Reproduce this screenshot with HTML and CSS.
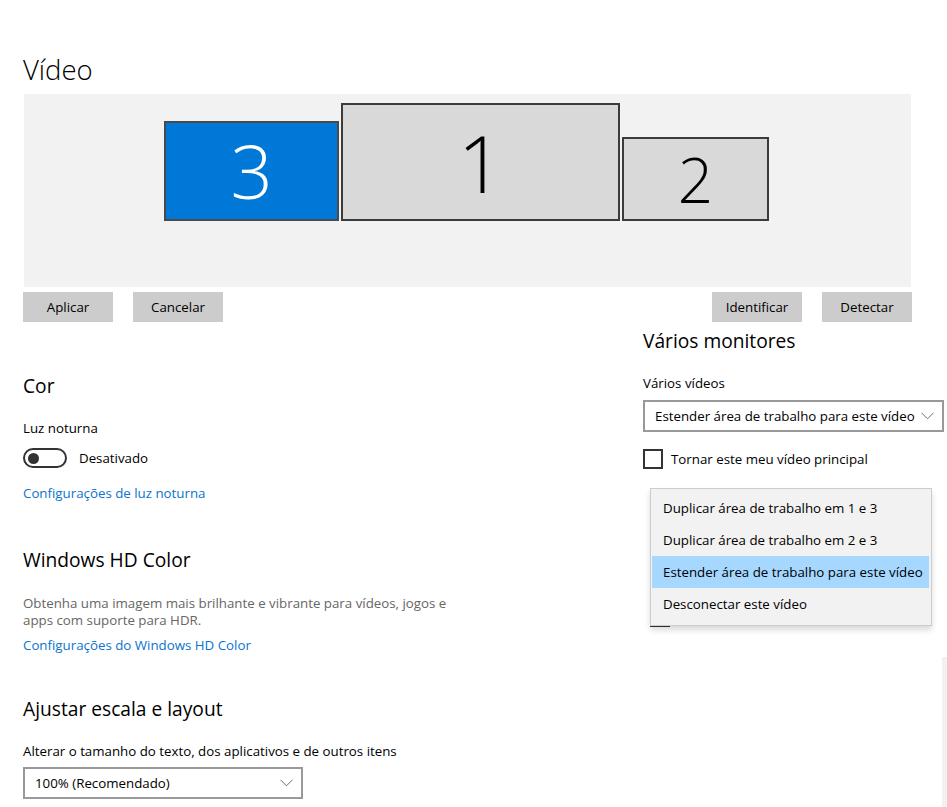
FILE: index.html
```html
<!DOCTYPE html>
<html lang="pt-BR">
<head>
<meta charset="utf-8">
<title>Vídeo</title>
<link rel="stylesheet" href="styles.css">
</head>
<body>
<div class="page">
  <h1 class="title">Vídeo</h1>
  <div class="arrange">
    <div class="monitors">
      <div class="mon mon3 selected"><span>3</span></div>
      <div class="mon mon1"><span>1</span></div>
      <div class="mon mon2"><span>2</span></div>
    </div>
  </div>
  <div class="btnrow">
    <div class="btngroup">
      <div class="btn">Aplicar</div>
      <div class="btn">Cancelar</div>
    </div>
    <div class="btngroup">
      <div class="btn">Identificar</div>
      <div class="btn">Detectar</div>
    </div>
  </div>
  <div class="cols">
    <div class="left">
      <h2 class="h2 cor">Cor</h2>
      <div class="label luz">Luz noturna</div>
      <div class="toggle-row">
        <div class="toggle"><div class="knob"></div></div>
        <span>Desativado</span>
      </div>
      <div class="link link1">Configurações de luz noturna</div>

      <h2 class="h2 hd">Windows HD Color</h2>
      <div class="desc">Obtenha uma imagem mais brilhante e vibrante para vídeos, jogos e<br>apps com suporte para HDR.</div>
      <div class="link link2">Configurações do Windows HD Color</div>

      <h2 class="h2 scale">Ajustar escala e layout</h2>
      <div class="label alt">Alterar o tamanho do texto, dos aplicativos e de outros itens</div>
      <div class="select select-scale">
        <span>100% (Recomendado)</span>
        <svg class="chev" width="13" height="8" viewBox="0 0 13 8"><polyline points="0.5,0.8 6.5,6.8 12.5,0.8" fill="none" stroke="#707070" stroke-width="1"/></svg>
      </div>
    </div>
    <div class="right">
      <h2 class="h2 multi">Vários monitores</h2>
      <div class="label vv">Vários vídeos</div>
      <div class="select select-multi">
        <span>Estender área de trabalho para este vídeo</span>
        <svg class="chev" width="13" height="8" viewBox="0 0 13 8"><polyline points="0.5,0.8 6.5,6.8 12.5,0.8" fill="none" stroke="#707070" stroke-width="1"/></svg>
      </div>
      <div class="check-row">
        <div class="checkbox"></div>
        <span>Tornar este meu vídeo principal</span>
      </div>
      <div class="hidden-line"></div>
      <div class="menu">
        <div class="item">Duplicar área de trabalho em 1 e 3</div>
        <div class="item">Duplicar área de trabalho em 2 e 3</div>
        <div class="item active">Estender área de trabalho para este vídeo</div>
        <div class="item">Desconectar este vídeo</div>
      </div>
    </div>
  </div>
</div>
<div class="scrollbar"></div>
</body>
</html>
```
FILE: styles.css
```css
html, body {
  margin: 0;
  padding: 0;
  background: #fff;
}
body {
  font-family: "Open Sans", "Noto Sans", "Liberation Sans", sans-serif;
  font-size: 13.3px;
  color: #000;
  width: 947px;
  height: 807px;
  overflow: hidden;
  position: relative;
}
.page {
  padding-left: 23px;
}
.title {
  margin: 0;
  padding-top: 52px;
  font-size: 27.5px;
  font-weight: 300;
  line-height: 36px;
  height: 42px;
}
.arrange {
  margin-left: 1px;
  width: 887px;
  height: 193px;
  background: #f2f2f2;
  box-sizing: border-box;
  padding-top: 9px;
  padding-left: 140px;
}
.monitors {
  display: flex;
  align-items: flex-start;
  height: 118px;
}
.mon {
  box-sizing: border-box;
  border: 2px solid #3b3b3b;
  background: #d9d9d9;
  display: flex;
  align-items: center;
  justify-content: center;
  font-weight: 300;
  color: #000;
  align-self: flex-end;
}
.mon span { line-height: 1; }
.mon3 {
  width: 175px;
  height: 100px;
  background: #0078d7;
  color: #fff;
  border-color: #4a4a4a;
  font-size: 74px;
  margin-right: 2px;
}
.mon1 {
  width: 279px;
  height: 118px;
  font-size: 80px;
  margin-right: 2px;
}
.mon2 {
  width: 147px;
  height: 84px;
  font-size: 62px;
}
.btnrow {
  display: flex;
  justify-content: space-between;
  width: 889px;
  margin-top: 5px;
}
.btngroup {
  display: flex;
  gap: 20px;
}
.btn {
  width: 90px;
  height: 30px;
  background: #cccccc;
  display: flex;
  align-items: center;
  justify-content: center;
}
.cols {
  display: grid;
  grid-template-columns: 620px 304px;
}
.h2 {
  margin: 0;
  font-size: 19.2px;
  font-weight: 400;
  line-height: 28px;
}
.label, .link, .toggle-row, .check-row {
  line-height: 20px;
}
.cor { margin-top: 50px; }
.luz { margin-top: 18px; }
.toggle-row {
  margin-top: 10px;
  display: flex;
  align-items: center;
  gap: 12px;
}
.toggle {
  box-sizing: border-box;
  width: 44px;
  height: 20px;
  border: 2px solid #333;
  border-radius: 10px;
  display: flex;
  align-items: center;
  padding-left: 3px;
}
.knob {
  width: 11px;
  height: 11px;
  border-radius: 50%;
  background: #333;
}
.link { color: #0a74d0; }
.link1 { margin-top: 15px; }
.hd { margin-top: 43px; }
.desc {
  margin-top: 21px;
  color: #666;
  line-height: 17px;
}
.link2 { margin-top: 6px; }
.scale { margin-top: 40px; }
.alt { margin-top: 18px; }
.select {
  box-sizing: border-box;
  height: 32px;
  border: 2px solid #999;
  display: flex;
  align-items: center;
  justify-content: space-between;
  padding: 0 8px 0 10px;
  white-space: nowrap;
}
.select-scale {
  margin-top: 6px;
  width: 280px;
}
.multi { margin-top: 5px; }
.vv { margin-top: 18px; }
.select-multi {
  margin-top: 7px;
  width: 301px;
}
.check-row {
  margin-top: 17px;
  display: flex;
  align-items: center;
  gap: 8px;
}
.checkbox {
  box-sizing: border-box;
  width: 20px;
  height: 20px;
  border: 2px solid #333;
}
.right { position: relative; }
.hidden-line {
  margin-top: 156px;
  margin-left: 7px;
  width: 20px;
  height: 2px;
  background: #333;
}
.menu {
  position: absolute;
  left: 7px;
  top: 166px;
  width: 282px;
  box-sizing: border-box;
  background: #f2f2f2;
  border: 1px solid #cccccc;
  box-shadow: 0 4px 6px rgba(0,0,0,0.15);
  padding: 3px 2px 5px 1px;
}
.item {
  height: 32px;
  line-height: 32px;
  padding-left: 11px;
  white-space: nowrap;
}
.item.active { background: #a6d8ff; }
.scrollbar {
  position: absolute;
  right: 0;
  top: 657px;
  width: 5px;
  height: 150px;
  background: #f1f1f1;
}
```
